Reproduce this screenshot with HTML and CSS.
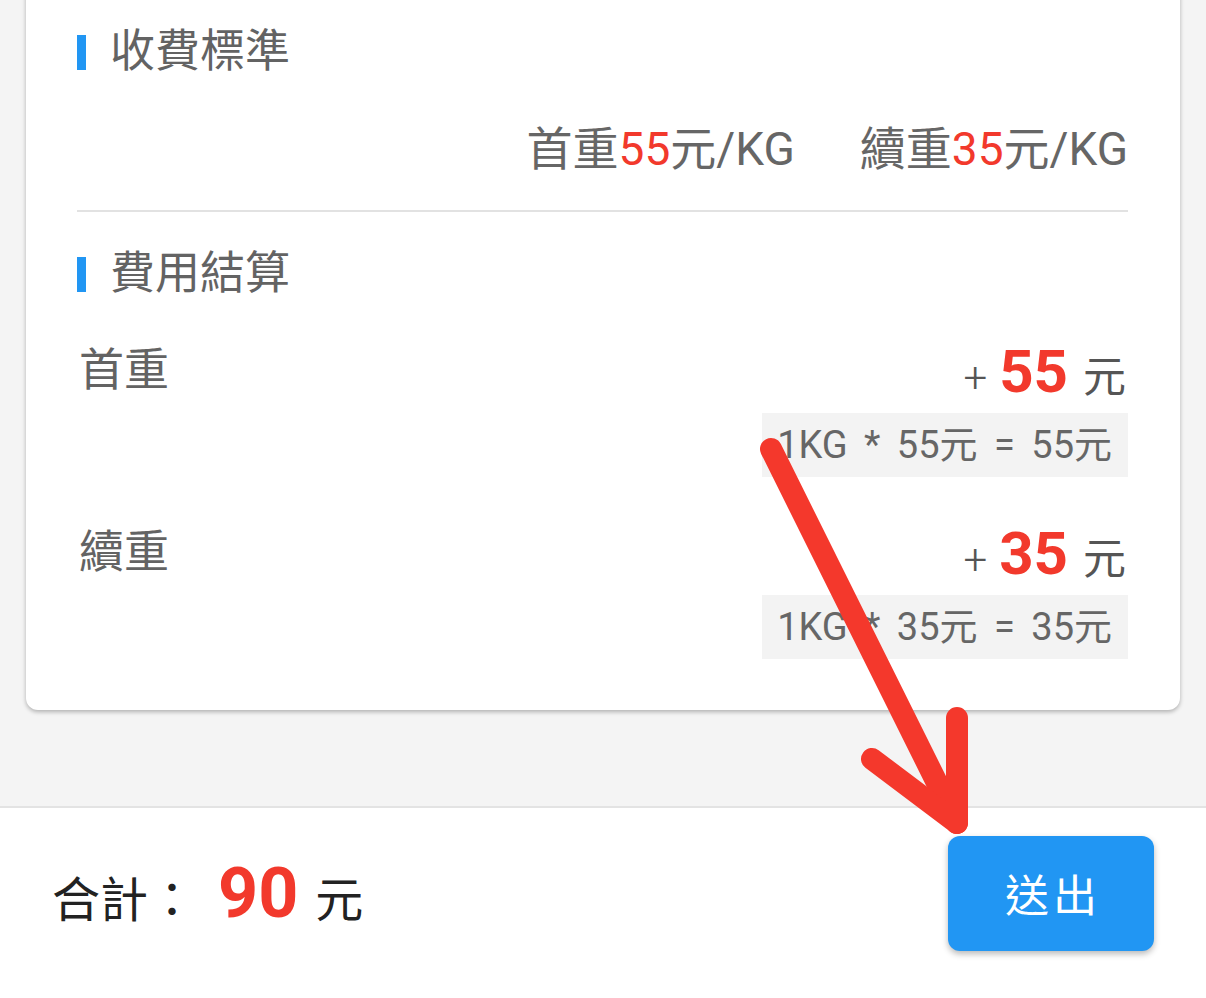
FILE: index.html
```html
<!DOCTYPE html>
<html lang="zh-Hant">
<head>
<meta charset="utf-8">
<title>費用結算</title>
<link rel="stylesheet" href="styles.css">
</head>
<body>
<div class="screen">
  <main class="content">
    <section class="card">
      <h2 class="sec-title">收費標準</h2>
      <div class="rates">
        <span class="rate">首重<em>55</em>元/KG</span>
        <span class="rate">續重<em>35</em>元/KG</span>
      </div>
      <div class="divider"></div>
      <h2 class="sec-title">費用結算</h2>
      <div class="fee-row">
        <div class="fee-label">首重</div>
        <div class="fee-detail">
          <div class="fee-amount"><span class="plus">+</span><span class="num">55</span><span class="unit">元</span></div>
          <div class="formula">1KG * 55元 = 55元</div>
        </div>
      </div>
      <div class="fee-row second">
        <div class="fee-label">續重</div>
        <div class="fee-detail">
          <div class="fee-amount"><span class="plus">+</span><span class="num">35</span><span class="unit">元</span></div>
          <div class="formula">1KG * 35元 = 35元</div>
        </div>
      </div>
    </section>
  </main>
  <footer class="footer">
    <div class="total"><span class="total-label">合計：</span><span class="total-num">90</span><span class="total-unit">元</span></div>
    <button class="submit" type="button">送出</button>
  </footer>
  <svg class="arrow" width="1206" height="998" viewBox="0 0 1206 998" aria-hidden="true">
    <path d="M771 449 L957 823" />
    <path d="M872 759 L957 823 L957 718" />
  </svg>
</div>
</body>
</html>
```

FILE: styles.css
```css
* {
  box-sizing: border-box;
}

html, body {
  margin: 0;
  padding: 0;
}

body {
  background: #f4f4f4;
  font-family: "Roboto", "Noto Sans CJK TC", sans-serif;
  color: #666;
  overflow: hidden;
}

.screen {
  position: relative;
  width: 1206px;
  height: 998px;
  display: flex;
  flex-direction: column;
  overflow: hidden;
}

.content {
  flex: 1;
  padding: 0 26px;
}

.card {
  margin-top: -20px;
  background: #fff;
  border-radius: 12px;
  box-shadow: 0 2px 4px rgba(0, 0, 0, 0.28);
  padding: 42px 52px 51px 51px;
}

.sec-title {
  margin: 0;
  display: flex;
  align-items: center;
  font-size: 45px;
  font-weight: 400;
  line-height: 60px;
  height: 60px;
  color: #636363;
}

.sec-title::before {
  content: "";
  width: 9px;
  height: 35px;
  background: #2196f3;
  margin-right: 24px;
  flex: none;
}

.rates {
  margin-top: 37px;
  display: flex;
  justify-content: flex-end;
  gap: 65px;
  font-size: 46px;
  line-height: 60px;
  color: #666;
}

.rate em {
  font-style: normal;
  color: #f2392c;
}

.divider {
  margin-top: 31px;
  height: 2px;
  background: #e2e2e2;
}

.divider + .sec-title {
  margin-top: 32px;
}

.fee-row {
  margin-top: 37px;
  display: flex;
  justify-content: space-between;
  align-items: flex-start;
}

.fee-row.second {
  margin-top: 46px;
}

.fee-label {
  font-size: 45px;
  line-height: 60px;
  color: #636363;
  padding-left: 2px;
}

.fee-detail {
  display: flex;
  flex-direction: column;
  align-items: flex-end;
}

.fee-amount {
  display: flex;
  align-items: baseline;
  height: 60px;
  margin-top: 1px;
  padding-right: 2px;
}

.fee-amount .plus {
  font-size: 42px;
  font-weight: 300;
  line-height: 1;
  color: #555;
  margin-right: 12px;
}

.fee-amount .num {
  font-size: 60px;
  line-height: 1;
  font-weight: 700;
  color: #f2392c;
}

.fee-amount .unit {
  font-size: 43px;
  line-height: 1;
  color: #555;
  margin-left: 15px;
}

.formula {
  margin-top: 11px;
  height: 64px;
  line-height: 64px;
  padding: 0 16px 0 15px;
  background: #f3f3f3;
  font-size: 38px;
  word-spacing: 7px;
  color: #666;
  white-space: pre;
}

.footer {
  height: 192px;
  flex: none;
  background: #fff;
  border-top: 2px solid #e3e3e3;
  display: flex;
  align-items: center;
  justify-content: space-between;
  padding: 0 52px 20px 52px;
}

.total {
  display: flex;
  align-items: baseline;
  color: #222;
}

.total-label {
  font-size: 48px;
  line-height: 1;
}

.total-num {
  font-size: 70px;
  line-height: 1;
  font-weight: 700;
  color: #f2392c;
  margin-left: 22px;
}

.total-unit {
  font-size: 48px;
  line-height: 1;
  margin-left: 17px;
}

.submit {
  width: 206px;
  height: 115px;
  border: none;
  border-radius: 12px;
  background: #2196f3;
  color: #fff;
  font-family: "Roboto", "Noto Sans CJK TC", sans-serif;
  font-size: 44px;
  letter-spacing: 4px;
  padding: 0 0 0 4px;
  box-shadow: 0 3px 6px rgba(0, 0, 0, 0.28);
}

.arrow {
  position: absolute;
  left: 0;
  top: 0;
  pointer-events: none;
}

.arrow path {
  fill: none;
  stroke: #f4382c;
  stroke-width: 22;
  stroke-linecap: round;
  stroke-linejoin: round;
}
```
